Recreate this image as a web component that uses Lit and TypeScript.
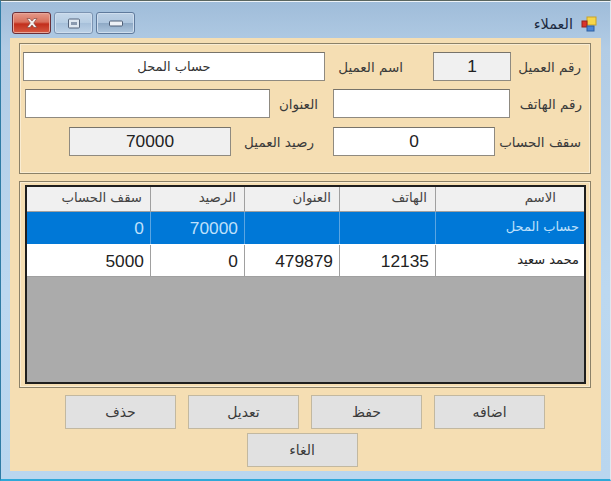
import { LitElement, html, css } from "lit";
import { customElement } from "lit/decorators.js";

const rows = [
  { name: "حساب المحل", phone: "", addr: "", bal: "70000", cap: "0", sel: true },
  { name: "محمد سعيد", phone: "12135", addr: "479879", bal: "0", cap: "5000", sel: false },
];

@customElement("app-root")
export class AppRoot extends LitElement {
  static styles = css`
    :host { display: block; width: 611px; height: 481px; font-family: "Liberation Sans", "DejaVu Sans", sans-serif; color: #222; }
    * { box-sizing: border-box; }
    .frame { width: 611px; height: 481px; display: flex; flex-direction: column; padding: 1px 0 8px 1px;
      background: linear-gradient(180deg, #9fbcd9 0%, #b2cce5 10%, #bcd8f0 60%, #b9d6ef 100%);
      border-top: 1px solid #5a6660; border-left: 1px solid #2f7ca5; border-right: 1px solid #dfe8ef; border-bottom: 2px solid #2fa8d8;
      box-shadow: inset 0 1px 0 #eef3f7; }
    .title { height: 36px; flex: none; display: flex; align-items: flex-start; justify-content: space-between; padding: 10px 13px 0 10px; }
    .wbtns { display: flex; gap: 3px; }
    .wb { width: 39px; height: 22px; border-radius: 3px; border: 1px solid #7c94b2; display: flex; align-items: center; justify-content: center;
      background: linear-gradient(180deg, #c6d8ea 0%, #b6cde3 50%, #a7c0da 52%, #bdd2e7 100%); box-shadow: inset 0 0 0 1px #cfdeee; }
    .wb.min { border-color: #5f7a9c; background: linear-gradient(180deg, #bcd0e5 0%, #aec6de 50%, #8faac6 52%, #aec6de 100%); }
    .wb.close { border-color: #6a2f38; background: linear-gradient(180deg, #e59a8a 0%, #d8705c 45%, #c22f1c 55%, #d65a42 100%); box-shadow: inset 0 0 0 1px #e8a79a; }
    .wb svg { display: block; }
    .cap { display: flex; align-items: center; gap: 8px; font-family: "DejaVu Sans", sans-serif; font-size: 14.5px; color: #1c2a40; direction: ltr; margin-top: 4px; }
    .client { flex: 1; background: #f5deb3; padding: 5px 10px 0 9px; margin: 0 9px 0 8px; display: flex; flex-direction: column; }
    .group { border: 1px solid #8b8168; box-shadow: inset 0 0 0 1px #f9ecd2; }
    .top { height: 131px; padding: 8px 8px 0 3px; display: flex; flex-direction: column; gap: 8px; }
    .row { display: flex; align-items: center; height: 29px; }
    .in { height: 29px; border: 1px solid #8f8a80; border-top-color: #77736a; background: #fff; display: flex; align-items: center; justify-content: center;
      font-size: 17.33px; flex: none; }
    .in.ro { background: #f0f0f0; }
    .in.ar { font-family: "DejaVu Sans", sans-serif; font-size: 13px; direction: rtl; color: #333; }
    .lb { font-family: "DejaVu Sans", sans-serif; font-size: 13.5px; direction: rtl; text-align: right; flex: none; color: #3a3a3a; white-space: nowrap; }
    .w302 { width: 302px; } .w245 { width: 245px; } .w177 { width: 177px; } .w162 { width: 162px; } .w78 { width: 78px; }
    .r1 .in.w302 { margin-right: 10px; }
    .r1 .name { width: 68px; margin-right: 30px; }
    .r1 .num { width: 70px; }
    .r2 { padding-left: 2px; }
    .r2 .addr { width: 48px; margin-right: 15px; }
    .r2 .ph { width: 72px; }
    .r3 { padding-left: 46px; margin-top: 1px; }
    .r3 .bal { width: 83px; margin-right: 19px; }
    .r3 .cap2 { width: 86px; }
    .gridbox { margin-top: 7px; height: 207px; padding: 3px 4px 4px 5px; }
    .grid { height: 199px; border: 2px solid #1e1e1e; background: #ababab; }
    .gr { display: grid; grid-template-columns: 124px 94px 95px 96px 149px; direction: ltr; }
    .gh { height: 25px; background: #f0f0f0; border-bottom: 1px solid #a0a0a0; }
    .gh div { font-family: "DejaVu Sans", sans-serif; font-size: 13.3px; direction: rtl; text-align: right; padding: 3px 8px 0 0; border-right: 1px solid #a0a0a0; color: #444; white-space: nowrap; overflow: hidden; }
    .gh div:last-child { border-right: 0; padding-right: 29px; }
    .gc { height: 32px; background: #fff; border-bottom: 1px solid #a0a0a0; }
    .gc div { font-size: 17.33px; text-align: right; padding: 6px 6px 0 0; border-right: 1px solid #a0a0a0; color: #222; }
    .gc div:last-child { border-right: 0; font-family: "DejaVu Sans", sans-serif; font-size: 13px; direction: rtl; padding: 7px 6px 0 0; }
    .gc.sel { height: 33px; background: #0078d7; border-bottom-color: #fff; }
    .gc.sel div { color: #bfe0fb; border-right-color: #5aa5e2; }
    .btns { display: flex; flex-direction: column; align-items: center; gap: 4px; margin-top: 7px; }
    .brow { display: flex; justify-content: center; gap: 12px; }
    .brow.second { margin-right: 6px; }
    .b { width: 111px; height: 34px; background: #e1e1e1; border: 1px solid #c2b8a0; font-family: "DejaVu Sans", sans-serif; font-size: 14px; display: flex; align-items: center; justify-content: center; color: #3a3a3a; direction: rtl; }
  `;

  render() {
    return html`<div class="frame">
      <div class="title">
        <div class="wbtns">
          <div class="wb close"><svg width="16" height="12" viewBox="0 0 16 12"><path d="M3 1.5h3L8 4l2-2.5h3L9.7 6 13 10.5h-3L8 8l-2 2.5H3L6.3 6z" fill="#f1eeee" stroke="#7a3b34" stroke-width=".6"/></svg></div>
          <div class="wb"><svg width="14" height="11" viewBox="0 0 14 11"><rect x="1.5" y="1" width="11" height="9" rx="1" fill="#dfe8f2" stroke="#55657c"/><rect x="4" y="4" width="6" height="3" fill="#8a9ab0"/></svg></div>
          <div class="wb min"><svg width="14" height="7" viewBox="0 0 14 7"><rect x=".5" y="1" width="13" height="5" rx="1" fill="#eef2f7" stroke="#4f5f77"/></svg></div>
        </div>
        <div class="cap">
          <span>العملاء</span>
          <svg width="16" height="16" viewBox="0 0 16 16"><rect x="6" y="1" width="9" height="8" fill="#f6d64a" stroke="#c9a227"/><rect x="1" y="5" width="5" height="6" fill="#d9342b" stroke="#96241d"/><rect x="6" y="10" width="7" height="5" fill="#4a86d8" stroke="#2f5f9f"/></svg>
        </div>
      </div>
      <div class="client">
        <div class="group top">
          <div class="row r1">
            <div class="in ar w302">حساب المحل</div>
            <div class="lb name">اسم العميل</div>
            <div class="in ro w78">1</div>
            <div class="lb num">رقم العميل</div>
          </div>
          <div class="row r2">
            <div class="in w245"></div>
            <div class="lb addr">العنوان</div>
            <div class="in w177"></div>
            <div class="lb ph">رقم الهاتف</div>
          </div>
          <div class="row r3">
            <div class="in ro w162">70000</div>
            <div class="lb bal">رصيد العميل</div>
            <div class="in w162">0</div>
            <div class="lb cap2">سقف الحساب</div>
          </div>
        </div>
        <div class="group gridbox">
          <div class="grid">
            <div class="gr gh"><div>سقف الحساب</div><div>الرصيد</div><div>العنوان</div><div>الهاتف</div><div>الاسم</div></div>
            ${rows.map(r => html`<div class="gr gc ${r.sel ? "sel" : ""}"><div>${r.cap}</div><div>${r.bal}</div><div>${r.addr}</div><div>${r.phone}</div><div>${r.name}</div></div>`)}
          </div>
        </div>
        <div class="btns">
          <div class="brow"><div class="b">حذف</div><div class="b">تعديل</div><div class="b">حفظ</div><div class="b">اضافه</div></div>
          <div class="brow second"><div class="b">الغاء</div></div>
        </div>
      </div>
    </div>`;
  }
}
